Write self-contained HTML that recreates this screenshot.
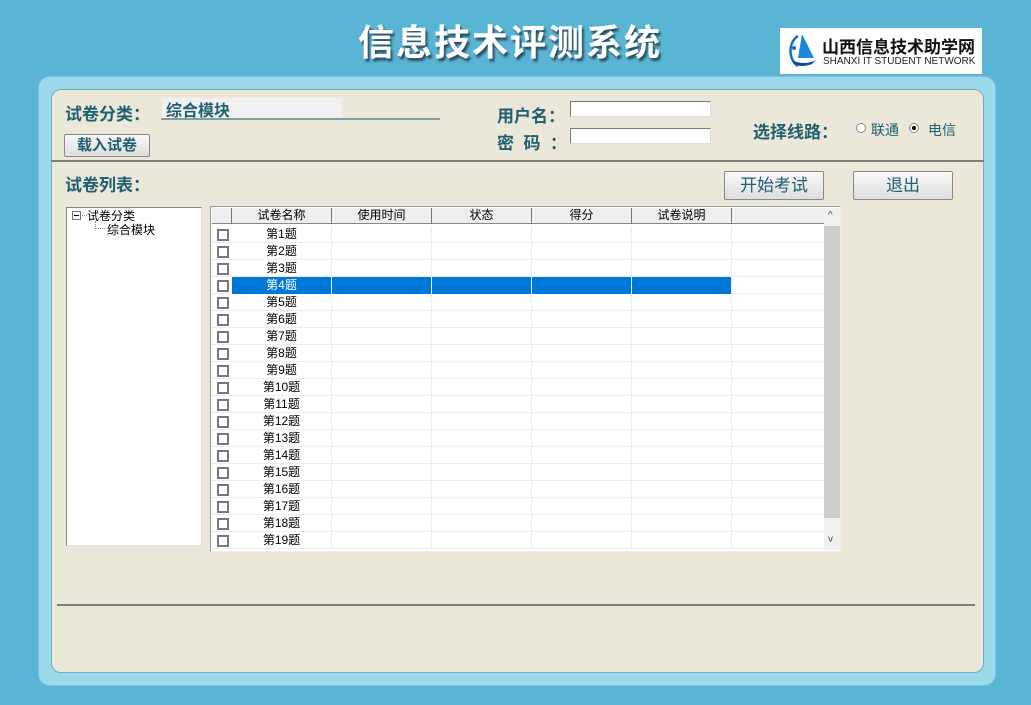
<!DOCTYPE html>
<html><head><meta charset="utf-8"><style>
*{margin:0;padding:0;box-sizing:border-box}
body{width:1031px;height:705px;background:#5ab5d5;position:relative;overflow:hidden;font-family:"Liberation Sans","Noto Sans CJK SC",sans-serif}
.a{position:absolute}
.lbl{color:#1f5f70;font-size:16px;white-space:nowrap;font-weight:bold}
.btn{position:absolute;background:linear-gradient(#f8f8f8,#dedede);border:1px solid #8a8a8a;border-radius:2px;color:#1f5f70;text-align:center;font-size:16px}
.inp{position:absolute;background:#fff;border:1px solid #7a7a7a;border-right-color:#ddd;border-bottom-color:#ddd}
.row{position:absolute;left:212px;width:612px;height:17px;border-bottom:1px solid #ececec;font-size:12px;color:#000}
.row .c{position:absolute;top:0;height:17px;border-right:1px solid #ececec;text-align:center;line-height:17px}
.cb{position:absolute;left:5px;top:3px;width:12px;height:12px;border:2px solid #777;background:#fff}
</style></head><body>
<div class="a" style="left:358px;top:14px;font-size:36px;font-weight:bold;color:#fff;letter-spacing:2px;text-shadow:2px 3px 2px #2a5060;white-space:nowrap">信息技术评测系统</div>
<div class="a" style="left:780px;top:28px;width:202px;height:46px;background:#fff">
<svg class="a" style="left:4px;top:4px" width="36" height="38" viewBox="0 0 36 38"><path d="M14 4 C4 10 4 28 14 34" stroke="#1a6fc0" stroke-width="2.5" fill="none"/><path d="M18 2 L30 26 L14 26 Z" fill="#1a8ad8"/><path d="M8 28 Q20 34 32 28 L28 32 Q18 36 10 32Z" fill="#0a4aa0"/><circle cx="10" cy="16" r="2" fill="#1a6fc0"/></svg>
<div class="a" style="left:42px;top:5px;font-size:17px;font-weight:bold;color:#111;white-space:nowrap">山西信息技术助学网</div>
<div class="a" style="left:43px;top:28px;font-size:10px;color:#222;white-space:nowrap">SHANXI IT STUDENT NETWORK</div>
</div>
<div class="a" style="left:38px;top:76px;width:958px;height:610px;background:#9cd9ea;border-radius:12px;border:1px solid #7cc4dc"></div>
<div class="a" style="left:51px;top:89px;width:933px;height:584px;background:#ebe8da;border-radius:10px;border:1px solid #6fb0c4"></div>

<div class="a lbl" style="left:65px;top:100px;font-size:17px">试卷分类：</div>
<div class="a" style="left:162px;top:98px;width:180px;height:20px;background:#f0f0f0"></div>
<div class="a lbl" style="left:166px;top:97px;font-size:16px">综合模块</div>
<div class="a" style="left:161px;top:118px;width:279px;height:2px;background:#7f9f9f"></div>
<div class="btn" style="left:64px;top:134px;width:86px;height:23px;line-height:21px;font-size:15px;font-weight:bold">载入试卷</div>

<div class="a lbl" style="left:497px;top:102px;font-size:17px">用户名：</div>
<div class="a lbl" style="left:497px;top:129px;font-size:17px">密&nbsp;&nbsp;码&nbsp;&nbsp;：</div>
<div class="inp" style="left:570px;top:101px;width:141px;height:16px"></div>
<div class="inp" style="left:570px;top:128px;width:141px;height:16px"></div>
<div class="a lbl" style="left:753px;top:118px;font-size:17px">选择线路：</div>
<div class="a" style="left:856px;top:123px;width:10px;height:10px;border-radius:50%;border:1px solid #888;background:#fff"></div>
<div class="a lbl" style="left:871px;top:120px;font-size:14px;font-weight:normal">联通</div>
<div class="a" style="left:909px;top:123px;width:10px;height:10px;border-radius:50%;border:1px solid #888;background:#fff"><div class="a" style="left:2px;top:2px;width:4px;height:4px;background:#000;border-radius:50%"></div></div>
<div class="a lbl" style="left:928px;top:120px;font-size:14px;font-weight:normal">电信</div>

<div class="a" style="left:51px;top:160px;width:933px;height:2px;background:#7f7f77"></div>
<div class="a lbl" style="left:65px;top:171px;font-size:17px">试卷列表：</div>
<div class="btn" style="left:724px;top:171px;width:100px;height:29px;line-height:27px;font-size:17px">开始考试</div>
<div class="btn" style="left:853px;top:171px;width:100px;height:29px;line-height:27px;font-size:17px">退出</div>

<div class="a" style="left:66px;top:207px;width:136px;height:339px;background:#fff;border:1px solid #888;border-right-color:#ddd;border-bottom-color:#ddd"></div>
<div class="a" style="left:72px;top:211px;width:9px;height:9px;border:1px solid #777;background:#fff"><div class="a" style="left:1px;top:3px;width:5px;height:1px;background:#000"></div></div>
<div class="a" style="left:82px;top:215px;width:5px;border-top:1px dotted #888"></div>
<div class="a" style="left:87px;top:207px;font-size:12px;color:#000">试卷分类</div>
<div class="a" style="left:95px;top:221px;height:8px;width:10px;border-left:1px dotted #888;border-bottom:1px dotted #888"></div>
<div class="a" style="left:107px;top:221px;font-size:12px;color:#000">综合模块</div>

<div class="a" style="left:210px;top:206px;width:631px;height:346px;background:#fff;border:1px solid #999;border-right-color:#eee;border-bottom-color:#eee"></div>
<div class="a" style="left:212px;top:208px;width:612px;height:16px;background:#eee;border-bottom:1px solid #888;font-size:12px;color:#000">
<div class="a" style="left:0;width:20px;height:15px;border-right:1px solid #777"></div>
<div class="a" style="left:20px;width:100px;text-align:center;border-right:1px solid #777;line-height:15px">试卷名称</div>
<div class="a" style="left:120px;width:100px;text-align:center;border-right:1px solid #777;line-height:15px">使用时间</div>
<div class="a" style="left:220px;width:100px;text-align:center;border-right:1px solid #777;line-height:15px">状态</div>
<div class="a" style="left:320px;width:100px;text-align:center;border-right:1px solid #777;line-height:15px">得分</div>
<div class="a" style="left:420px;width:100px;text-align:center;border-right:1px solid #777;line-height:15px">试卷说明</div>
</div>
<div class="a" style="left:824px;top:208px;width:16px;height:342px;background:#f0f0f0"><div class="a" style="left:0;top:18px;width:16px;height:292px;background:#cdcdcd"></div><div class="a" style="left:4px;top:2px;font-size:10px;color:#555">^</div><div class="a" style="left:4px;top:326px;font-size:10px;color:#555">v</div></div>
<div id="rows"></div>
<script>
var h='';for(var i=1;i<=19;i++){var t=226+(i-1)*17;var s=i==4;h+='<div class="row" style="top:'+t+'px"><div class="cb"></div>'+
'<div class="c" style="left:20px;width:100px;'+(s?'background:#0078d7;color:#fff;':'')+'">第'+i+'题</div>';
for(var c=1;c<5;c++)h+='<div class="c" style="left:'+(20+c*100)+'px;width:100px;'+(s?'background:#0078d7;':'')+'"></div>';
h+='<div class="c" style="left:520px;width:92px;border-right:none"></div></div>';}
document.getElementById('rows').innerHTML=h;
</script>
<div class="a" style="left:57px;top:604px;width:918px;height:2px;background:#7f7f77"></div>
</body></html>
